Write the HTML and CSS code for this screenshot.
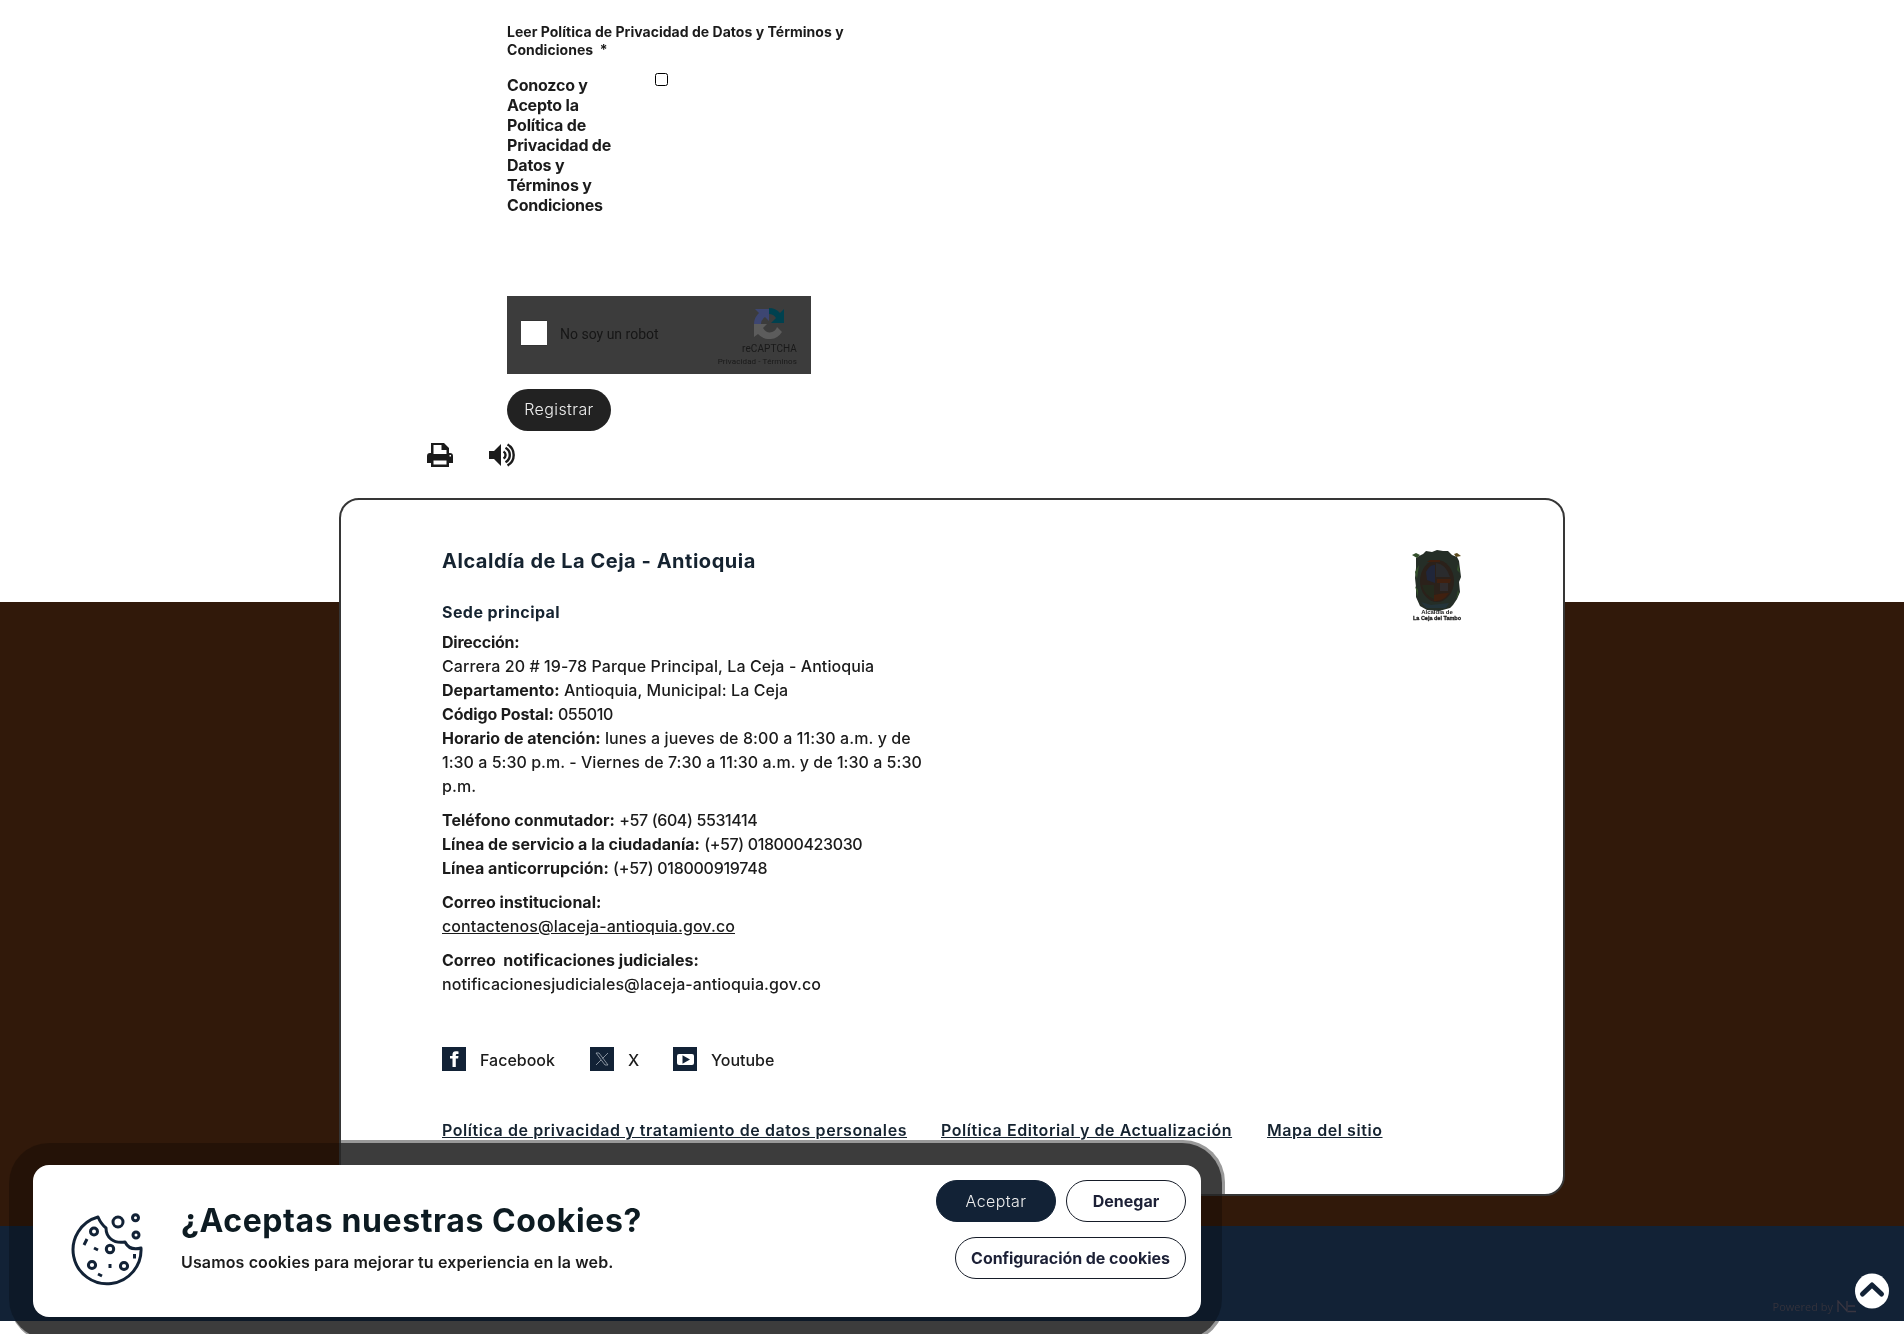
FILE: index.html
```html
<!DOCTYPE html>
<html lang="es">
<head>
<meta charset="utf-8">
<title>Alcaldía de La Ceja - Antioquia</title>
<link rel="stylesheet" href="styles.css">
</head>
<body>
<main class="content">
  <form class="form">
    <p class="legend"><span class="l1">Leer Política de Privacidad de Datos y Términos y</span><br><span class="l2">Condiciones &nbsp;*</span></p>
    <div class="consent">
      <label for="ok">Conozco y<br>Acepto la<br>Política de<br>Privacidad de<br>Datos y<br>Términos y<br>Condiciones</label>
      <input id="ok" class="check" type="checkbox">
    </div>
    <div class="captcha">
      <span class="captcha-box"></span>
      <span class="captcha-text">No soy un robot</span>
      <div class="captcha-brand">
        <svg width="30" height="31" viewBox="0 0 30 31"><path fill="#00414f" d="M15 0a15 15 0 0 1 11 5l4-4v14H17l5-5a9 9 0 0 0-7-4z"/><path fill="#3d4672" d="M15 0v13l-4-4a9 9 0 0 0-4 7H0A15 15 0 0 1 5 5L1 1h14z"/><path fill="#5c5c5c" d="M0 16h13l-4 4c4 7 12 5 14-1l5 5A15 15 0 0 1 4 26l-4 3z"/></svg>
        <span class="captcha-name">reCAPTCHA</span>
        <span class="captcha-links">Privacidad - Términos</span>
      </div>
    </div>
    <button class="submit" type="button"><span>Registrar</span></button>
  </form>
  <div class="tools">
    <svg width="26" height="24" viewBox="0 0 26 24"><path fill="#1b1b1b" fill-rule="evenodd" d="M4 0h13l5 5v5h1a3 3 0 0 1 3 3v7h-4v4H4v-4H0v-7a3 3 0 0 1 3-3h1zM6.500 2v9h13V7h-5V2zM6.500 17.500v4h13v-4zM22.500 12v1.500h1.500v-1.500z"/></svg>
    <svg width="27" height="24" viewBox="0 0 27 24"><path fill="#1b1b1b" d="M0 8h5l7-7v22l-7-7H0z"/><path fill="none" stroke="#1b1b1b" stroke-width="2.400" d="M14.500 8.500a4 4 0 0 1 0 7M16.500 4.800a8.200 8.200 0 0 1 0 14.400M18.500 1.500a12 12 0 0 1 0 21"/></svg>
  </div>
</main>
<footer class="footer">
  <section class="card">
    <div class="card-head">
      <div class="info">
        <h2><span>Alcaldía de La Ceja - Antioquia</span></h2>
        <h3><span>Sede principal</span></h3>
        <p><b class="a1">Dirección:</b><br><span>Carrera 20 # 19-78 Parque Principal, La Ceja - Antioquia</span><br><b>Departamento:</b> <span>Antioquia, Municipal: La Ceja</span><br><b class="a5">Código Postal:</b> <span class="digits">055010</span><br><b>Horario de atención:</b> <span>lunes a jueves de 8:00 a 11:30 a.m. y de</span><br><span class="a9">1:30 a 5:30 p.m. - Viernes de 7:30 a 11:30 a.m. y de 1:30 a 5:30</span><br><span>p.m.</span></p>
        <p><b>Teléfono conmutador:</b> <span class="digits">+57 (604) 5531414</span><br><b>Línea de servicio a la ciudadanía:</b> <span class="digits">(+57) 018000423030</span><br><b>Línea anticorrupción:</b> <span class="digits b6">(+57) 018000919748</span></p>
        <p><b>Correo institucional:</b><br><a>contactenos@laceja-antioquia.gov.co</a></p>
        <p><b>Correo &nbsp;notificaciones judiciales:</b><br><span>notificacionesjudiciales@laceja-antioquia.gov.co</span></p>
      </div>
      <svg class="crest" width="50" height="72" viewBox="0 0 50 72"><path fill="#252e27" d="M4 8l3-2 4-2 3-3 6 1 5-2 6 1 5 0 4 4 5 2 2 4 1 8 1 8-2 5 1 10-3 7-4 6-3 3-11 3-12-1-7-4-4-9 0-10-1-9 1-10z"/><path fill="#34502c" d="M0 5l4-2 4 2-3 3zM3 22l4-7-2 14zM3 36l3 4v7zM46 14l2 9-3-3zM46 40l1 3-3 7z"/><path fill="#5b4a1d" d="M42 4l3-1 4 3-5 1z"/><ellipse cx="25" cy="31" rx="17" ry="21" fill="#2b211a"/><path fill="#20263a" d="M14 22q4-8 9-7v18l-8-3z"/><path fill="#2a2b2d" d="M24 13q10 1 14 14H24z"/><path fill="#40200f" d="M25 29h14l-1 4H25zM22 45q8-2 15-2-6 9-15 8zM18 10h10v2H15z"/><path fill="#242a1d" d="M10 35h12v14q-10-4-12-14z"/><path fill="#302c2d" d="M28 33h8v8h-8z"/><path fill="#24343a" d="M9 52l10 3 18-2-3 5H14z"/><text class="crest-text" x="25" y="64" text-anchor="middle">Alcaldía de</text><text class="crest-text b" x="25" y="70" text-anchor="middle" textLength="48" lengthAdjust="spacingAndGlyphs">La Ceja del Tambo</text></svg>
    </div>
    <div class="social">
      <a class="s1"><svg width="24" height="24"><path fill="#122236" d="M0 0h24v24H0z"/><path fill="#fff" d="M10.500 20v-8.500H8V9h2.500V7.500c0-3 2-4 6-3V7c-2-.3-2.700 0-2.700 1.200V9h2.700l-.4 2.500h-2.300V20z"/></svg><span>Facebook</span></a>
      <a class="s2"><svg width="24" height="24"><path fill="#122236" d="M0 0h24v24H0z"/><path fill="none" stroke="#b6bdc6" stroke-width=".7" d="M6 6h3l9 12h-3zM18 6l-5.500 5.500M11 13l-5 5"/></svg><span>X</span></a>
      <a class="s3"><svg width="24" height="24"><path fill="#122236" d="M0 0h24v24H0z"/><rect x="4" y="7" width="17" height="11" rx="2" fill="#fff"/><path fill="#122236" d="M9.500 8.200l7.500 4.300-7.500 4.300z"/></svg><span>Youtube</span></a>
    </div>
    <nav class="links"><a class="k1">Política de privacidad y tratamiento de datos personales</a><a class="k2">Política Editorial y de Actualización</a><a class="k3">Mapa del sitio</a></nav>
  </section>
  <div class="bar">
    <span class="powered">Powered by</span>
    <svg class="ne" width="19" height="13" viewBox="0 0 19 13"><path fill="none" stroke="#3a3641" stroke-width="1.300" d="M1 12V1l9 10V1M18 6h-7M11 11.500h8"/></svg>
  </div>
</footer>
<a class="top"><svg width="34" height="36" viewBox="0 0 34 36"><ellipse cx="17" cy="18" rx="17" ry="17.500" fill="#fff"/><path fill="none" stroke="#122236" stroke-width="5" stroke-linecap="round" stroke-linejoin="round" d="M7.500 21l9.500-9 9.500 9"/></svg></a>
<div class="halo"></div>
<div class="halo inner"></div>
<div class="halo shade"></div>
<aside class="cookies">
  <svg class="cookie" width="76" height="76" viewBox="0 0 76 76" fill="none" stroke="#122236" stroke-width="3"><path d="M28 4A34 34 0 1 0 71 35C64 37 58 35 55 29C43 31 36 24 36 15Q31 11 28 4Z" stroke-linejoin="round"/><circle cx="24" cy="18.500" r="3.500"/><circle cx="48" cy="9" r="5"/><circle cx="65.500" cy="4.800" r="3"/><circle cx="66" cy="22" r="3"/><circle cx="40" cy="36" r="3.700"/><circle cx="22" cy="52" r="3.600"/><circle cx="54" cy="53" r="3.600"/><path d="M17 26l-3 6M24 35l4 2M64.500 41v4.500M40 51v4M28 61l4 2"/></svg>
  <div class="cookie-copy"><h2><span>¿Aceptas nuestras Cookies?</span></h2><p><span>Usamos cookies para mejorar tu experiencia en la web.</span></p></div>
  <div class="cookie-actions">
    <button class="btn dark"><span>Aceptar</span></button><button class="btn"><span>Denegar</span></button><button class="btn wide"><span>Configuración de cookies</span></button>
  </div>
</aside>
</body>
</html>
```
FILE: styles.css
```css
* { box-sizing: border-box; }
body { margin: 0; height: 1334px; overflow: hidden; background: #fff; color: #1b1b1b; font: 500 16px/24px Inter, "Liberation Sans", sans-serif; position: relative; }
h2, h3, p { margin: 0; }
svg { display: block; flex: none; }
button { font: inherit; padding: 0; cursor: pointer; }
span, b, a { white-space: nowrap; }
.content { height: 498px; padding: 23px 0 0 427px; }
.form { margin-left: 80px; }
.legend { font-size: 14px; line-height: 18px; font-weight: 700; height: 36px; letter-spacing: .03px; }
.consent { display: flex; margin-top: 12px; height: 225px; padding-top: 4px; }
.consent label { width: 148px; font-size: 16px; line-height: 20px; font-weight: 700; letter-spacing: -.2px; }
.check { appearance: none; width: 13px; height: 13px; margin: -2px 0 0; border: 1px solid #000; border-radius: 2.500px; }
.captcha { display: flex; align-items: center; width: 304px; height: 78px; padding: 0 14px; background: #3c3c3c; color: #161616; font: 14px/18px Roboto, sans-serif; }
.captcha-box { width: 26px; height: 26px; margin-bottom: 4px; background: #fff; border: 1px solid #333; border-width: 1px 0; }
.captcha-text { margin-left: 13px; margin-bottom: 2px; }
.captcha-brand { margin-left: auto; width: 80px; height: 78px; padding-top: 12px; display: flex; flex-direction: column; align-items: flex-end; color: #191919; }
.captcha-brand svg { margin-right: 13px; }
.captcha-name { font-size: 10px; line-height: 14px; margin-top: 3px; letter-spacing: .1px; }
.captcha-links { font-size: 8px; line-height: 11px; letter-spacing: .12px; }
.submit { display: block; margin-top: 15px; width: 104px; height: 42px; border: 0; border-radius: 21px; background: #222; color: #eee; font-weight: 300; letter-spacing: .4px; padding-bottom: 2px; }
.tools { display: flex; gap: 36px; margin-top: 12px; }
.footer { background: linear-gradient(#fff 104px, #31190a 104px, #31190a 728px, #122236 728px); height: 823px; }
.card { width: 1226px; height: 698px; margin-left: 339px; border: 2px solid #363636; border-radius: 20px; background: #fff; padding: 49px 101px 0; }
.card-head { display: flex; justify-content: space-between; }
.card h2 { font-size: 20px; line-height: 24px; font-weight: 700; color: #152330; margin-bottom: 27px; letter-spacing: .52px; }
.card h3 { font-size: 16px; line-height: 24px; font-weight: 700; color: #152330; margin-bottom: 6px; letter-spacing: .43px; }
.info p { margin-bottom: 10px; }
.info p span, .info p a { letter-spacing: .09px; }
.info p .digits { letter-spacing: -.38px; }
.info p .b6 { letter-spacing: -.27px; }
.info p .a9 { letter-spacing: .03px; }
.a1 { letter-spacing: -.25px; }
.a5 { letter-spacing: -.15px; }
.info a { text-decoration: underline; }
.crest-text { font: 700 6px "Liberation Sans", sans-serif; fill: #222; }
.crest-text.b { stroke: #222; stroke-width: .3px; }
.crest { margin-top: 1px; }
.social { display: flex; margin-top: 41px; }
.social a { display: flex; gap: 14px; }
.social span { padding-top: 1px; }
.s1 { width: 148px; } .s2 { width: 83px; }
.links { display: flex; margin-top: 46px; font-weight: 600; text-decoration: underline; color: #152330; letter-spacing: .57px; }
.k1 { width: 499px; } .k2 { width: 326px; }
.bar { margin-top: 30px; height: 95px; padding: 74px 48px 0 0; display: flex; justify-content: flex-end; color: #33323c; font: 11px/14px "Open Sans", sans-serif; }
.ne { margin-left: 4px; }
.top { position: absolute; left: 1855px; top: 1273px; }
.halo { position: absolute; left: 9px; top: 1140px; width: 1216px; height: 202px; border-radius: 42px; background: #999; mix-blend-mode: darken; }
.halo.inner { left: 9px; top: 1143px; width: 1213px; height: 196px; border-radius: 40px; background: #505050; }
.halo.shade { left: 9px; top: 1143px; width: 1213px; height: 196px; border-radius: 40px; background: rgba(0,0,0,.25); mix-blend-mode: normal; }
.cookies { position: absolute; left: 33px; top: 1165px; width: 1168px; height: 152px; border-radius: 16px; background: #fff; display: flex; padding: 15px; }
.cookie { margin: 33px 0 0 22px; }
.cookie-copy { margin-left: 35px; padding-top: 21px; flex: 1; }
.cookie-copy h2 { font-size: 32px; line-height: 40px; font-weight: 700; color: #0d1b22; letter-spacing: .6px; }
.cookie-copy p { font-weight: 600; margin-top: 9px; letter-spacing: .13px; }
.cookie-actions { display: flex; flex-wrap: wrap; justify-content: flex-end; align-content: flex-start; gap: 15px 10px; width: 260px; }
.btn { width: 120px; height: 42px; border: 1.500px solid #161c28; border-radius: 21px; background: #fff; color: #1c2036; font-weight: 700; padding-bottom: 1px; }
.btn.wide { width: 231px; letter-spacing: -.05px; }
.btn.dark { background: #122236; border-color: #122236; color: #eee; font-weight: 300; letter-spacing: .4px; }
```
